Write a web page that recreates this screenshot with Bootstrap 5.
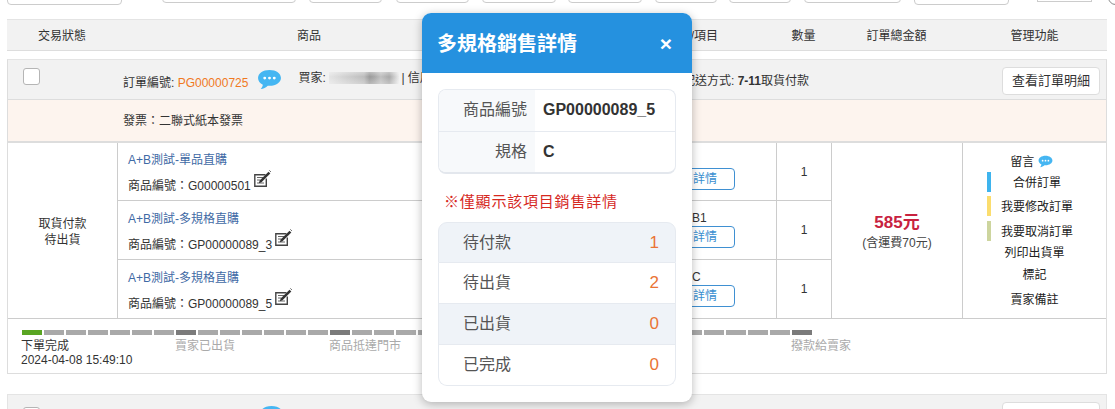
<!DOCTYPE html>
<html lang="zh-Hant">
<head>
<meta charset="utf-8">
<title>訂單管理</title>
<link href="https://cdn.jsdelivr.net/npm/bootstrap@5.3.0/dist/css/bootstrap.min.css" rel="stylesheet">
<style>
html,body{height:409px;overflow:hidden}
body{font-family:"Liberation Sans","Noto Sans CJK TC",sans-serif;font-size:12px;color:#333;background:#fff;position:relative}
.page-wrap{padding:0 8px 0 7px;height:409px;overflow:hidden}
.filter-strip{height:19px;position:relative}
.filter-box{position:absolute;top:-10px;border:1px solid #ccc;border-radius:4px;background:#fff}
.filter-round{position:absolute;top:-10px;left:1101px;width:15px;height:15px;border:1px solid #888;border-radius:50%}
.head-row{display:grid;grid-template-columns:110px 384px 275px 55px 131px 1fr;height:32px;padding-top:1px;background:#f2f2f2;border-top:1px solid #e4e4e4;border-bottom:1px solid #ddd;align-items:center;text-align:center}
.head-spec{text-align:right;padding-right:58px}
.order-block{margin-top:8px;border:1px solid #ddd;border-top-color:#e4e4e4}
.order-top{height:40px;background:#f2f2f2;border-bottom:1px solid #ddd;position:relative;display:flex;align-items:center}
.order-check{width:17px;height:17px;border:1px solid #b5b5b5;border-radius:3px;background:#fff;margin-left:15px;margin-top:-6px;flex:none}
.order-no{margin-left:83px;margin-top:7px;white-space:nowrap}
.order-no b{font-weight:400;color:#f0791f}
.bubble{margin:0 0 0 9px;flex:none}
.buyer{margin:-3px 0 0 16px;white-space:nowrap}
.blur-name{display:inline-block;width:70px;height:12px;vertical-align:-2px;margin-right:-1px;background:linear-gradient(180deg,rgba(255,255,255,.35),rgba(255,255,255,0) 40%,rgba(255,255,255,.3)),linear-gradient(90deg,#e4e4e4,#d2d2d2 22%,#c4c4c4 40%,#bcbcbc 50%,#9a9a9a 58%,#a5a5a5 64%,#c0c0c0 74%,#a8a8a8 86%,#ececec)}
.ship{position:absolute;left:675px;top:12px;white-space:nowrap}
.detail-btn{position:absolute;right:6px;top:7px;width:98px;height:28px;padding:0;font-size:13px;background:#fff;border:1px solid #ddd;color:#333;border-radius:4px}
.invoice-row{height:43px;background:#fdf4ee;border-bottom:2px solid #ddd;padding-left:115px;line-height:42px}
.items-grid{display:grid;grid-template-columns:110px 659px 55px 131px 1fr;grid-template-rows:58px 59px 58px;border-bottom:1px solid #ccc}
.cell-main{border-right:1px solid #ccc;display:flex;flex-direction:column;align-items:center;justify-content:center;text-align:center;line-height:16px;padding-top:2px}
.status-cell{grid-row:1/4;grid-column:1}
.product-cell{grid-column:2;border-right:1px solid #ccc;border-bottom:1px solid #ccc;position:relative;padding:9px 0 0 10px}
.product-cell.row-later{padding-top:10px}
.qty-inner{grid-column:3;border-right:1px solid #ccc;border-bottom:1px solid #ccc;display:flex;align-items:center;justify-content:center}
.last-row{border-bottom:0}
.prod-name{color:#3f6aa5;line-height:16px}
.prod-code{margin-top:9px;line-height:18px;white-space:nowrap}
.edit-icon{vertical-align:3px;margin-top:-8px}
.spec-side{position:absolute;left:574px;top:9px;line-height:16px;font-size:12px}
.spec-btn{position:absolute;left:512px;top:25px;width:105px;height:22px;border:1px solid #3f90d2;border-radius:4px;background:#fff;color:#3a8fd0;font-size:12px;line-height:20px;text-align:right;padding:0 17px 0 0}
.price-cell{grid-row:1/4;grid-column:4;border-right:1px solid #ccc;display:flex;flex-direction:column;align-items:center;justify-content:center;padding-top:1px}
.price-num{color:#c8223f;font-size:17px;font-weight:700;line-height:22px;margin-bottom:1px}
.price-sub{line-height:16px;color:#444}
.admin-cell{grid-row:1/4;grid-column:5;position:relative}
.admin-line{position:absolute;left:0;right:0;text-align:center;line-height:16px;color:#222;white-space:nowrap}
.tag-bar{position:absolute;left:24px;width:4px;height:20px}
.steps{height:54px;padding:11px 0 0 14px;position:relative}
.seg-row{display:flex;gap:2px;height:5px}
.seg-row i{width:20px;background:#a9a9a9;display:block}
.seg-row i.seg-done{background:#59a522}
.seg-row i.seg-key{background:#7b7b7b}
.step-label{position:absolute;top:20px;line-height:14px;color:#aaa;white-space:nowrap}
.step-label.step-on{color:#333}
.order-next{margin-top:20px;height:40px;background:#f2f2f2;border:1px solid #e4e4e4;position:relative}
.next-check{position:absolute;left:15px;top:12px;width:17px;height:17px;border:1px solid #b5b5b5;border-radius:3px;background:#fff}
.next-bubble{position:absolute;left:251px;top:10px}
.next-btn{position:absolute;right:6px;top:7px;width:98px;height:28px;background:#fff;border:1px solid #ddd;border-radius:4px}
.sale-modal{position:absolute;left:422px;top:13px;width:270px;height:389px;background:#fff;border-radius:9px;box-shadow:0 2px 10px rgba(0,0,0,.28);overflow:hidden;font-size:16px}
.sale-head{height:60px;background:#2591df;color:#fff;padding:0 16px 0 15px;display:flex;align-items:center;justify-content:space-between}
.sale-title{font-size:20px;font-weight:700;padding-top:1px}
.sale-close{font-size:21px;font-weight:700;line-height:1;margin-right:4px;color:#fff}
.sale-body{padding:16px}
.spec-table{border:1px solid #e6eaf0;border-radius:8px;overflow:hidden;border-bottom:2px solid #e3e7ed}
.spec-tr{display:flex;height:41px;align-items:stretch}
.spec-tr + .spec-tr{border-top:1px solid #e6eaf0}
.spec-th{width:96px;background:#f7f9fb;color:#555;text-align:right;padding-right:8px;line-height:40px}
.spec-td{padding-left:8px;line-height:40px;font-weight:700;color:#333}
.sale-note{color:#d6291f;font-size:15px;margin:19px 0 11px 6px;line-height:18px;letter-spacing:.8px}
.sale-list{border-radius:9px;border-color:#e6eaf0}
.sale-list .list-group-item{height:41px;padding:0 16px 0 24px;display:flex;align-items:center;justify-content:space-between;border-color:#e6eaf0;color:#555;font-size:16px}
.sale-list .list-group-item.item-alt{background:#eff3f8}
.sale-val{color:#ea7435;font-size:17px}
</style>
</head>
<body>
<svg width="0" height="0" class="position-absolute">
<symbol id="ic-bubble" viewBox="0 0 26 22"><path d="M13 1C6 1 1 4.700 1 9.400c0 3 2 5.500 5 7-.2 1.600-1 3.200-2.200 4.600 2.900-.3 5.500-1.700 7.400-3.500.6.100 1.200.1 1.800.1 7 0 12-3.700 12-8.200C25 4.700 20 1 13 1z" fill="#45b6f2"/><circle cx="8" cy="9.500" r="1.500" fill="#fff"/><circle cx="13" cy="9.500" r="1.500" fill="#fff"/><circle cx="18" cy="9.500" r="1.500" fill="#fff"/></symbol>
<symbol id="ic-edit" viewBox="0 0 17 17"><path d="M11.500 4.700H.8v11.500h11.500V8.500" fill="none" stroke="#444" stroke-width="1.400"/><path d="M3 7.500h6M3 10h3.500M3 13h7" stroke="#666" stroke-width="1"/><path d="M4.800 13.200l.9-2.800L14.500 1.800l1.800 1.800-8.800 8.700z" fill="#333"/><path d="M15.500.5l1.200 1.200" stroke="#333" stroke-width="1"/></symbol>
</svg>
<div class="page-wrap">
  <div class="filter-strip">
    <span class="filter-box" style="left:0;width:115px;height:15px"></span>
    <span class="filter-box" style="left:155px;width:134px;height:13px"></span>
    <span class="filter-box" style="left:302px;width:73px;height:13px"></span>
    <span class="filter-box" style="left:389px;width:73px;height:13px"></span>
    <span class="filter-box" style="left:475px;width:74px;height:13px"></span>
    <span class="filter-box" style="left:561px;width:74px;height:13px"></span>
    <span class="filter-box" style="left:648px;width:62px;height:13px"></span>
    <span class="filter-box" style="left:722px;width:62px;height:13px"></span>
    <span class="filter-box" style="left:797px;width:97px;height:13px"></span>
    <span class="filter-box" style="left:907px;width:95px;height:15px"></span>
    <span class="filter-box rounded-0" style="left:1030px;width:55px;height:12px"></span>
    <span class="filter-round"></span>
  </div>
  <div class="head-row">
    <div>交易狀態</div><div>商品</div><div class="head-spec">/項目</div><div>數量</div><div>訂單總金額</div><div>管理功能</div>
  </div>
  <div class="order-block">
    <div class="order-top">
      <span class="order-check"></span>
      <span class="order-no">訂單編號: <b>PG00000725</b></span>
      <svg class="bubble" width="25" height="21"><use href="#ic-bubble"/></svg>
      <span class="buyer">買家: <span class="blur-name"></span> | 信用卡</span>
      <span class="ship">配送方式: <strong>7-11</strong>取貨付款</span>
      <button type="button" class="btn detail-btn">查看訂單明細</button>
    </div>
    <div class="invoice-row">發票：二聯式紙本發票</div>
    <div class="items-grid">
      <div class="cell-main status-cell"><div>取貨付款</div><div>待出貨</div></div>
      <div class="product-cell">
        <div class="prod-name">A+B測試-單品直購</div>
        <div class="prod-code">商品編號：G00000501 <svg class="edit-icon" width="17" height="17"><use href="#ic-edit"/></svg></div>
        <a class="spec-btn text-decoration-none" href="#">銷售詳情</a>
      </div>
      <div class="qty-inner">1</div>
      <div class="product-cell row-later" style="grid-row:2;grid-column:2">
        <div class="prod-name">A+B測試-多規格直購</div>
        <div class="prod-code">商品編號：GP00000089_3 <svg class="edit-icon" width="17" height="17"><use href="#ic-edit"/></svg></div>
        <span class="spec-side">B1</span>
        <a class="spec-btn text-decoration-none" href="#">銷售詳情</a>
      </div>
      <div class="qty-inner" style="grid-row:2;grid-column:3">1</div>
      <div class="product-cell row-later last-row" style="grid-row:3;grid-column:2">
        <div class="prod-name">A+B測試-多規格直購</div>
        <div class="prod-code">商品編號：GP00000089_5 <svg class="edit-icon" width="17" height="17"><use href="#ic-edit"/></svg></div>
        <span class="spec-side">C</span>
        <a class="spec-btn text-decoration-none" href="#">銷售詳情</a>
      </div>
      <div class="qty-inner last-row" style="grid-row:3;grid-column:3">1</div>
      <div class="price-cell">
        <div class="price-num">585元</div>
        <div class="price-sub">(含運費70元)</div>
      </div>
      <div class="admin-cell">
        <div class="admin-line" style="top:11px;padding-right:6px">留言 <svg width="15" height="13" style="vertical-align:-2px"><use href="#ic-bubble"/></svg></div>
        <span class="tag-bar" style="top:29px;background:#3eb4ee"></span>
        <div class="admin-line" style="top:32px;padding-left:5px">合併訂單</div>
        <span class="tag-bar" style="top:53px;background:#fbdd6e"></span>
        <div class="admin-line" style="top:56px;padding-left:5px">我要修改訂單</div>
        <span class="tag-bar" style="top:78px;background:#cdd59e"></span>
        <div class="admin-line" style="top:81px;padding-left:5px">我要取消訂單</div>
        <div class="admin-line" style="top:102px">列印出貨單</div>
        <div class="admin-line" style="top:124px">標記</div>
        <div class="admin-line" style="top:149px">賣家備註</div>
      </div>
    </div>
    <div class="steps">
      <div class="seg-row">
        <i class="seg-done"></i><i></i><i></i><i></i><i></i><i></i><i></i><i class="seg-key"></i><i></i><i></i><i></i><i></i><i></i><i></i><i class="seg-key"></i><i></i><i></i><i></i><i></i><i></i><i></i><i class="seg-key"></i><i></i><i></i><i></i><i></i><i></i><i></i><i class="seg-key"></i><i></i><i></i><i></i><i></i><i></i><i></i><i class="seg-key"></i>
      </div>
      <div class="step-label step-on" style="left:13px">下單完成<br>2024-04-08 15:49:10</div>
      <div class="step-label" style="left:167px">賣家已出貨</div>
      <div class="step-label" style="left:321px">商品抵達門市</div>
      <div class="step-label" style="left:783px">撥款給賣家</div>
    </div>
  </div>
  <div class="order-next">
    <span class="next-check"></span>
    <svg class="next-bubble" width="25" height="21"><use href="#ic-bubble"/></svg>
    <span class="next-btn"></span>
  </div>
</div>

<div class="sale-modal" role="dialog">
  <div class="sale-head">
    <div class="sale-title">多規格銷售詳情</div>
    <div class="sale-close">×</div>
  </div>
  <div class="sale-body">
    <div class="spec-table">
      <div class="spec-tr"><div class="spec-th">商品編號</div><div class="spec-td">GP00000089_5</div></div>
      <div class="spec-tr"><div class="spec-th">規格</div><div class="spec-td">C</div></div>
    </div>
    <div class="sale-note">※僅顯示該項目銷售詳情</div>
    <ul class="list-group sale-list">
      <li class="list-group-item item-alt"><span>待付款</span><span class="sale-val">1</span></li>
      <li class="list-group-item"><span>待出貨</span><span class="sale-val">2</span></li>
      <li class="list-group-item item-alt"><span>已出貨</span><span class="sale-val">0</span></li>
      <li class="list-group-item"><span>已完成</span><span class="sale-val">0</span></li>
    </ul>
  </div>
</div>
<script src="https://cdn.jsdelivr.net/npm/bootstrap@5.3.0/dist/js/bootstrap.bundle.min.js"></script>
</body>
</html>
